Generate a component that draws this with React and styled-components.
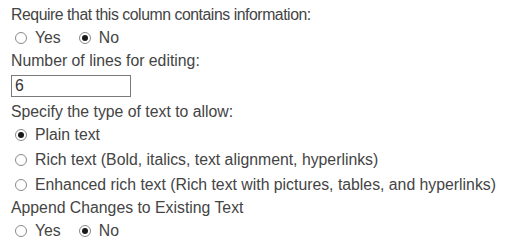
import React from 'react';
import styled, { createGlobalStyle } from 'styled-components';

const GlobalStyle = createGlobalStyle`
  body {
    margin: 0;
    background: #fff;
    font-family: "Liberation Sans", Arial, sans-serif;
  }
`;

const Form = styled.div`
  padding: 4px 0 0 11px;
  color: #444;
  font-size: 15.8px;
`;

const Label = styled.div`
  line-height: 21px;
  letter-spacing: ${({ tight }) => (tight ? '-0.45px' : '0')};
`;

const RadioRow = styled.div`
  display: flex;
  flex-direction: ${({ stacked }) => (stacked ? 'column' : 'row')};
  gap: ${({ stacked }) => (stacked ? '0' : '18px')};
  padding-left: 4px;
`;

const Option = styled.label`
  display: flex;
  align-items: center;
  gap: 8px;
  line-height: 25px;
`;

const Dot = styled.span`
  width: 12px;
  height: 12px;
  margin-top: 1px;
  border: 1px solid #8a8a8a;
  border-radius: 50%;
  box-sizing: border-box;
  display: flex;
  align-items: center;
  justify-content: center;
  &::after {
    content: '';
    display: ${({ checked }) => (checked ? 'block' : 'none')};
    width: 6px;
    height: 6px;
    border-radius: 50%;
    background: #1a1a1a;
  }
`;

const TextBox = styled.div`
  width: 120px;
  height: 22px;
  box-sizing: border-box;
  border: 1px solid #7a7a7a;
  margin: 4px 0;
  padding-left: 3px;
  line-height: 20px;
  color: #333;
`;

const Radio = ({ checked, children }) => (
  <Option>
    <Dot checked={checked} />
    {children}
  </Option>
);

export default function App() {
  return (
    <>
      <GlobalStyle />
      <Form>
        <Label tight>Require that this column contains information:</Label>
        <RadioRow>
          <Radio>Yes</Radio>
          <Radio checked>No</Radio>
        </RadioRow>
        <Label>Number of lines for editing:</Label>
        <TextBox>6</TextBox>
        <Label>Specify the type of text to allow:</Label>
        <RadioRow stacked>
          <Radio checked>Plain text</Radio>
          <Radio>Rich text (Bold, italics, text alignment, hyperlinks)</Radio>
          <Radio>Enhanced rich text (Rich text with pictures, tables, and hyperlinks)</Radio>
        </RadioRow>
        <Label>Append Changes to Existing Text</Label>
        <RadioRow>
          <Radio>Yes</Radio>
          <Radio checked>No</Radio>
        </RadioRow>
      </Form>
    </>
  );
}
